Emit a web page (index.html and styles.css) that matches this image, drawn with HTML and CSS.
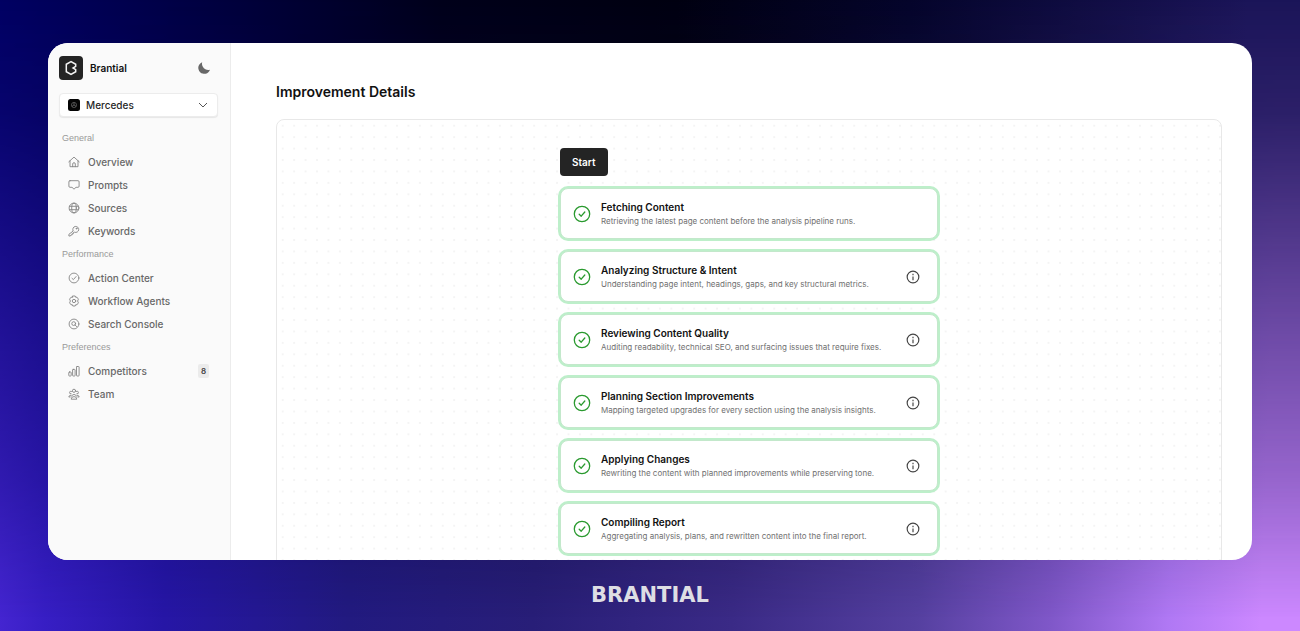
FILE: index.html
```html
<!DOCTYPE html>
<html lang="en">
<head>
<meta charset="utf-8">
<meta name="viewport" content="width=device-width, initial-scale=1">
<title>Brantial – Improvement Details</title>
<link rel="stylesheet" href="styles.css">
</head>
<body>
<div class="page">
  <div class="frame">
    <aside class="sidebar">
      <div class="brand">
        <svg class="brand-logo" viewBox="0 0 24 24" aria-hidden="true">
          <rect width="24" height="24" rx="4" fill="#242424"/>
          <path d="M12 5.600 7.300 8.300v7.400l4.700 2.700 4.700-2.700v-2L14 12l2.700-1.700v-2z" fill="none" stroke="#f4f4f4" stroke-width="1.500"/>
        </svg>
        <span class="brand-name">Brantial</span>
        <button class="theme" type="button" aria-label="Dark mode">
          <svg viewBox="0 0 14 14" width="14" height="14"><path d="M5.200 1.200A6 6 0 1 0 13 8.700 6.200 6.200 0 0 1 5.200 1.200z" fill="#686868"/></svg>
        </button>
      </div>
      <div class="project">
        <svg class="project-icon" viewBox="0 0 12 12" aria-hidden="true">
          <rect width="12" height="12" rx="2.500" fill="#050505"/>
          <circle cx="6" cy="6" r="2.600" fill="none" stroke="#777" stroke-width=".6"/>
          <path d="M6 3.500V6L3.900 7.400M6 6l2.100 1.400" fill="none" stroke="#888" stroke-width=".6"/>
        </svg>
        <select class="project-select" aria-label="Project"><option>Mercedes</option></select>
        <svg class="chevron" viewBox="0 0 10 10" aria-hidden="true"><path d="M1 3l4 4 4-4"/></svg>
      </div>
      <nav class="nav">
        <h2 class="nav-label">General</h2>
        <a class="nav-item" href="#"><svg class="icon" viewBox="0 0 12 12"><path d="M.8 5.800 6 1.100l5.200 4.700M2 4.900v5.800h8V4.900M4.700 10.700V8a1.300 1.300 0 0 1 2.600 0v2.700"/></svg>Overview</a>
        <a class="nav-item" href="#"><svg class="icon" viewBox="0 0 12 12"><path d="M2 1.700h8q1.100 0 1.100 1.100v4.400q0 1.100-1.100 1.100H8L6 10.200 4 8.300H2Q.9 8.300.9 7.200V2.800q0-1.100 1.100-1.100z"/></svg>Prompts</a>
        <a class="nav-item" href="#"><svg class="icon" viewBox="0 0 12 12"><circle cx="6" cy="6" r="4.900"/><ellipse cx="6" cy="6" rx="2.300" ry="4.900"/><path d="M1.500 4.300h9M1.500 7.700h9"/></svg>Sources</a>
        <a class="nav-item" href="#"><svg class="icon" viewBox="0 0 12 12"><path d="M5 5.700A3 3 0 1 1 6.600 7.200L5.400 7.500v1.200H4.200v1.200H3L2.400 11H.9V9.700z"/><circle cx="8.500" cy="3.600" r=".5"/></svg>Keywords</a>
        <h2 class="nav-label">Performance</h2>
        <a class="nav-item" href="#"><svg class="icon" viewBox="0 0 12 12"><circle cx="6" cy="6" r="4.900"/><path d="m4 6.300 1.400 1.300L8.100 4.500"/></svg>Action Center</a>
        <a class="nav-item" href="#"><svg class="icon" viewBox="0 0 12 12"><path d="M4.800 1h2.400l.5 1.300 1.300-.1 1.400 2-.8 1.800.8 1.800-1.400 2-1.300-.1L7.200 11H4.800l-.5-1.300-1.300.1-1.400-2L2.400 6l-.8-1.800 1.400-2 1.300.1z"/><circle cx="6" cy="6" r="1.700"/></svg>Workflow Agents</a>
        <a class="nav-item" href="#"><svg class="icon" viewBox="0 0 12 12"><circle cx="6" cy="6" r="4.900"/><circle cx="5.700" cy="5.600" r="1.900"/><path d="m7.100 7 1.500 1.600"/></svg>Search Console</a>
        <h2 class="nav-label">Preferences</h2>
        <a class="nav-item" href="#"><svg class="icon" viewBox="0 0 12 12"><rect x=".8" y="7" width="2.400" height="4" rx=".6"/><rect x="4.600" y="4.400" width="2.500" height="6.600" rx=".6"/><rect x="8.500" y="1.500" width="2.600" height="9.500" rx=".6"/></svg>Competitors<span class="badge">8</span></a>
        <a class="nav-item" href="#"><svg class="icon" viewBox="0 0 12 12"><circle cx="6" cy="2.800" r="1.600"/><path d="M3.500 3.400a1.300 1.300 0 1 0-.4 2.400M8.500 3.400a1.300 1.300 0 1 1 .4 2.400M3.400 8.200a2.800 2.800 0 0 1 5.200 0M2.800 7.200Q1 7.200.8 9h1.400M9.200 7.200Q11 7.200 11.200 9H9.800M3.200 10.800q0-2.200 2.800-2.200t2.800 2.200z"/></svg>Team</a>
      </nav>
    </aside>
    <main class="main">
      <h1 class="title">Improvement Details</h1>
      <section class="panel">
        <svg class="dots" aria-hidden="true">
          <defs><pattern id="dot" width="11.430" height="11.430" patternUnits="userSpaceOnUse"><circle cx="5.700" cy="5.700" r=".7" fill="#e2e2e2"/></pattern></defs>
          <rect width="100%" height="100%" fill="url(#dot)"/>
        </svg>
        <div class="flow">
          <button class="start" type="button">Start</button>
          <article class="step"><svg class="check" viewBox="0 0 18 18"><circle cx="9" cy="9" r="7.700"/><path d="m6.200 9.300 2 1.900 3.600-4.200"/></svg><div class="step-text"><h3>Fetching Content</h3><p>Retrieving the latest page content before the analysis pipeline runs.</p></div></article>
          <article class="step"><svg class="check" viewBox="0 0 18 18"><circle cx="9" cy="9" r="7.700"/><path d="m6.200 9.300 2 1.900 3.600-4.200"/></svg><div class="step-text"><h3>Analyzing Structure &amp; Intent</h3><p>Understanding page intent, headings, gaps, and key structural metrics.</p></div><button class="info" type="button" aria-label="Details"><svg viewBox="0 0 12 12"><circle cx="6" cy="6" r="5"/><path d="M6 5.500v3.200M6 3.200v1.200"/></svg></button></article>
          <article class="step"><svg class="check" viewBox="0 0 18 18"><circle cx="9" cy="9" r="7.700"/><path d="m6.200 9.300 2 1.900 3.600-4.200"/></svg><div class="step-text"><h3>Reviewing Content Quality</h3><p>Auditing readability, technical SEO, and surfacing issues that require fixes.</p></div><button class="info" type="button" aria-label="Details"><svg viewBox="0 0 12 12"><circle cx="6" cy="6" r="5"/><path d="M6 5.500v3.200M6 3.200v1.200"/></svg></button></article>
          <article class="step"><svg class="check" viewBox="0 0 18 18"><circle cx="9" cy="9" r="7.700"/><path d="m6.200 9.300 2 1.900 3.600-4.200"/></svg><div class="step-text"><h3>Planning Section Improvements</h3><p>Mapping targeted upgrades for every section using the analysis insights.</p></div><button class="info" type="button" aria-label="Details"><svg viewBox="0 0 12 12"><circle cx="6" cy="6" r="5"/><path d="M6 5.500v3.200M6 3.200v1.200"/></svg></button></article>
          <article class="step"><svg class="check" viewBox="0 0 18 18"><circle cx="9" cy="9" r="7.700"/><path d="m6.200 9.300 2 1.900 3.600-4.200"/></svg><div class="step-text"><h3>Applying Changes</h3><p>Rewriting the content with planned improvements while preserving tone.</p></div><button class="info" type="button" aria-label="Details"><svg viewBox="0 0 12 12"><circle cx="6" cy="6" r="5"/><path d="M6 5.500v3.200M6 3.200v1.200"/></svg></button></article>
          <article class="step"><svg class="check" viewBox="0 0 18 18"><circle cx="9" cy="9" r="7.700"/><path d="m6.200 9.300 2 1.900 3.600-4.200"/></svg><div class="step-text"><h3>Compiling Report</h3><p>Aggregating analysis, plans, and rewritten content into the final report.</p></div><button class="info" type="button" aria-label="Details"><svg viewBox="0 0 12 12"><circle cx="6" cy="6" r="5"/><path d="M6 5.500v3.200M6 3.200v1.200"/></svg></button></article>
        </div>
      </section>
    </main>
  </div>
  <footer class="wordmark">BRANTIAL</footer>
</div>
</body>
</html>
```
FILE: styles.css
```css
* { box-sizing: border-box; }

body {
  margin: 0;
  font-family: Inter, "Liberation Sans", sans-serif;
  font-size: 10px;
  line-height: 14px;
  color: #111;
}

h1, h2, h3, p { margin: 0; }
button { border: 0; padding: 0; font: inherit; background: none; }

.page {
  position: relative;
  isolation: isolate;
  display: flex;
  flex-direction: column;
  height: 100vh;
  padding: 43px 48px 0;
  background: linear-gradient(92deg, #4a28d6 0%, #371ec4 5%, #2616a6 14%, #221a80 28%, #281e78 42%, #3a2a86 57%, #5540a0 71%, #7f57c8 81%, #b078f4 90%, #cc88ff 97%);
}

/* Dark upper tones, fading out towards the bottom edge */
.page::before {
  content: "";
  position: absolute;
  inset: 0;
  z-index: -1;
  background: linear-gradient(90deg, #000062 0%, #000044 14%, #00001a 34%, #000010 52%, #04042a 70%, #1a1458 96%);
  mask-image: linear-gradient(180deg, #000 0%, rgba(0, 0, 0, 0.9) 18%, rgba(0, 0, 0, 0.58) 48%, rgba(0, 0, 0, 0.3) 76%, transparent 98%);
}

.frame {
  flex: 1;
  min-height: 0;
  display: flex;
  overflow: hidden;
  border-radius: 20px;
  background: #fff;
}

.sidebar {
  flex: none;
  width: 183px;
  padding: 13px 12px 0 11px;
  border-right: 1px solid #ececec;
  background: #fafafa;
}

.brand { display: flex; align-items: center; height: 24px; }
.brand-logo { width: 24px; height: 24px; margin-right: 7px; }
.brand-name { font-weight: 600; }
.theme { margin-left: auto; margin-right: 7px; display: flex; }

.project {
  display: flex;
  align-items: center;
  gap: 6px;
  height: 24px;
  margin: 13px 0 9px;
  padding: 0 9px 0 8px;
  border: 1px solid #ececec;
  border-radius: 4px;
  background: #fff;
  box-shadow: 0 1px 1px rgba(0, 0, 0, 0.08);
}
.project-icon { width: 12px; height: 12px; }
.project-select {
  flex: 1;
  appearance: none;
  border: 0;
  padding: 0;
  background: none;
  font: 500 10px/14px Inter, sans-serif;
  color: #262626;
}
.chevron { width: 10px; height: 10px; fill: none; stroke: #555; stroke-width: 1; }

.nav { display: flex; flex-direction: column; }
.nav-label {
  padding-left: 3px;
  font: 400 9px/24px "Liberation Sans", sans-serif;
  color: #999;
}
.nav-item {
  display: flex;
  align-items: center;
  gap: 8px;
  height: 23px;
  padding: 0 9px;
  font-weight: 500;
  color: #686868;
  text-decoration: none;
}
.icon { width: 12px; height: 12px; fill: none; stroke: #858585; stroke-width: 0.9; stroke-linejoin: round; stroke-linecap: round; }
.badge {
  margin-left: auto;
  padding: 0 3px;
  border-radius: 2px;
  background: #ebebeb;
  font-size: 8px;
  font-weight: 600;
  color: #444;
}

.main { flex: 1; min-width: 0; padding: 39px 30px 0 45px; }
.title { font-size: 14px; line-height: 20px; font-weight: 600; }

.panel {
  position: relative;
  margin-top: 17px;
  padding: 28px 20px 40px;
  border: 1px solid #e8e8e8;
  border-radius: 8px;
}
.dots { position: absolute; inset: 0; width: 100%; height: 100%; }

.flow {
  position: relative;
  display: flex;
  flex-direction: column;
  align-items: stretch;
  gap: 12px;
  max-width: 378px;
  margin: 0 auto;
}
.start {
  align-self: flex-start;
  padding: 7px 12px;
  border-radius: 4px;
  background: #242424;
  color: #fff;
  font-weight: 600;
}

.step {
  display: flex;
  align-items: center;
  gap: 10px;
  height: 51px;
  padding: 0 17px 0 12px;
  border: 1px solid #c3e8cb;
  border-radius: 8px;
  background: #fff;
  box-shadow: 0 0 0 2px #bdefca;
}
.check { flex: none; width: 18px; height: 18px; fill: none; stroke: #2a9a2f; stroke-width: 1.3; stroke-linecap: round; stroke-linejoin: round; }
.step-text { flex: 1; min-width: 0; }
.step h3 { font-size: 10px; line-height: 14px; font-weight: 600; }
.step p { font-size: 8px; line-height: 14px; color: #707070; white-space: nowrap; }
.info { flex: none; width: 14px; height: 14px; }
.info svg { display: block; width: 14px; height: 14px; fill: none; stroke: #444; stroke-width: 1; }

.wordmark {
  flex: none;
  height: 71px;
  text-align: center;
  font: 700 21px/70px "DejaVu Sans", sans-serif;
  color: #dedee4;
}
```
